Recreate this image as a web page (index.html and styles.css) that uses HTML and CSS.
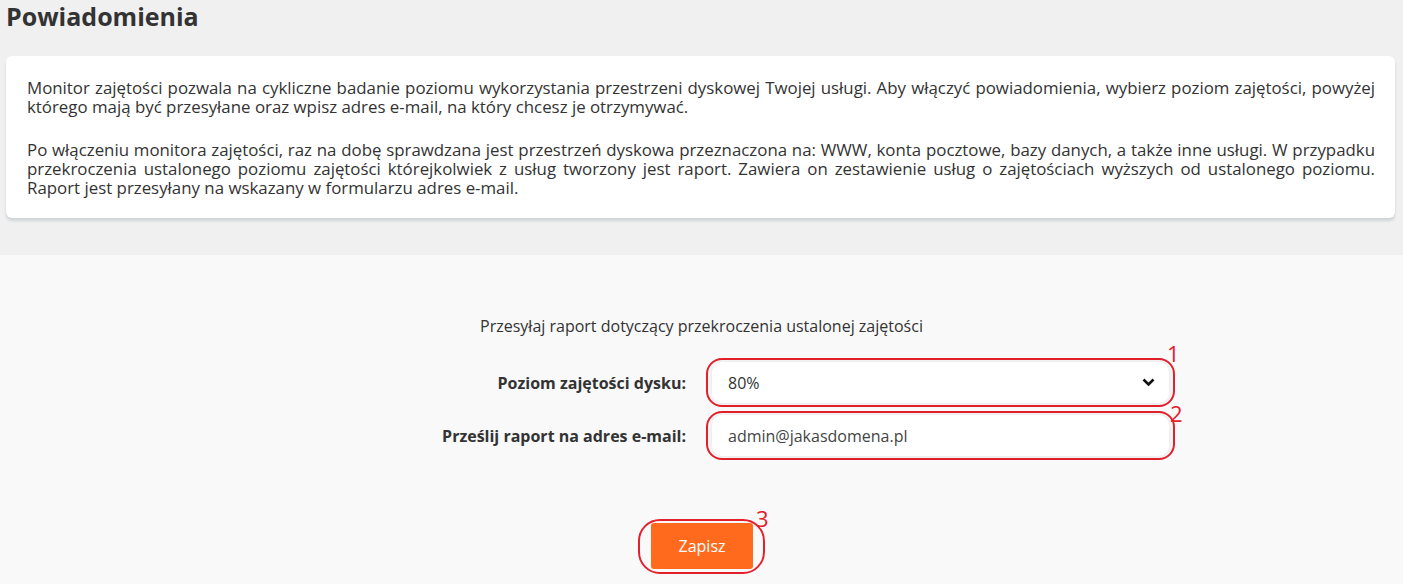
FILE: index.html
```html
<!DOCTYPE html>
<html lang="pl">
<head>
    <meta charset="UTF-8">
    <meta name="viewport" content="width=device-width, initial-scale=1.0">
    <title>Powiadomienia</title>
    <link rel="stylesheet" href="styles.css">
</head>
<body>

<div class="top">
    <h1>Powiadomienia</h1>
    <div class="info-card">
        <p>Monitor zajętości pozwala na cykliczne badanie poziomu wykorzystania przestrzeni dyskowej Twojej usługi. Aby włączyć powiadomienia, wybierz poziom zajętości, powyżej którego mają być przesyłane oraz wpisz adres e-mail, na który chcesz je otrzymywać.</p>
        <p>Po włączeniu monitora zajętości, raz na dobę sprawdzana jest przestrzeń dyskowa przeznaczona na: WWW, konta pocztowe, bazy danych, a także inne usługi. W przypadku przekroczenia ustalonego poziomu zajętości którejkolwiek z usług tworzony jest raport. Zawiera on zestawienie usług o zajętościach wyższych od ustalonego poziomu. Raport jest przesyłany na wskazany w formularzu adres e-mail.</p>
    </div>
</div>

<div class="settings">
    <div class="settings-title">Przesyłaj raport dotyczący przekroczenia ustalonej zajętości</div>

    <div class="form-grid">
        <label class="form-label" for="level">Poziom zajętości dysku:</label>
        <div class="mark">
            <span class="mark-num mark-num-1">1</span>
            <div class="field select-field" id="level">
                <span>80%</span>
                <svg class="chevron" width="13" height="9" viewBox="0 0 13 9">
                    <path d="M1.5 1.5 L6.5 6.5 L11.5 1.5" fill="none" stroke="#111" stroke-width="2.6"/>
                </svg>
            </div>
        </div>

        <label class="form-label" for="email">Prześlij raport na adres e-mail:</label>
        <div class="mark">
            <span class="mark-num mark-num-2">2</span>
            <input class="field" type="text" id="email" value="admin@jakasdomena.pl">
        </div>
    </div>

    <div class="save-row">
        <div class="mark mark-btn">
            <span class="mark-num mark-num-3">3</span>
            <button class="btn">Zapisz</button>
        </div>
    </div>
</div>

</body>
</html>
```

FILE: styles.css
```css
body {
    margin: 0;
    padding: 0;
    background-color: #f9f9f9;
    color: #333;
    font-family: "Open Sans", Arial, sans-serif;
    font-size: 16px;
    overflow: hidden;
}
.top {
    background-color: #f0f0f0;
    padding: 0 8px 37px 6px;
}
h1 {
    margin: 0 0 24px 0;
    font-size: 25px;
    line-height: 32px;
    font-weight: 700;
    color: #333;
}
.info-card {
    background-color: #fff;
    border-radius: 6px;
    padding: 22px 20px 21px 21px;
    box-shadow: 0 3px 3px rgba(40, 70, 90, 0.16);
}
.info-card p {
    margin: 0;
    font-size: 16.85px;
    line-height: 19px;
    text-align: justify;
}
.info-card p + p {
    margin-top: 24px;
}
.settings {
    padding: 62px 0 9px 0;
}
.settings-title {
    text-align: center;
    line-height: 19px;
    margin-bottom: 22px;
}
.form-grid {
    display: grid;
    grid-template-columns: 686px 469px;
    column-gap: 20px;
    row-gap: 4px;
    align-items: center;
}
.form-label {
    text-align: right;
    font-weight: 700;
}
.mark {
    position: relative;
    border: 2px solid #e3202b;
    border-radius: 16px;
    padding: 2px 4px;
}
.mark-num {
    position: absolute;
    color: #e3202b;
    font-size: 22px;
    line-height: 20px;
}
.mark-num-1 {
    left: calc(100% - 6px);
    top: -17px;
}
.mark-num-2 {
    left: calc(100% - 3px);
    top: -10px;
}
.mark-num-3 {
    left: calc(100% - 7px);
    top: -13px;
}
.field {
    display: flex;
    align-items: center;
    justify-content: space-between;
    box-sizing: border-box;
    width: 100%;
    height: 41px;
    padding: 0 14px 0 16px;
    background-color: #fff;
    border: none;
    border-radius: 10px;
    box-shadow: 0 0 5px rgba(0, 0, 0, 0.1);
    font-family: inherit;
    font-size: 16px;
    color: #333;
}
input.field {
    color: #444;
    outline: none;
}
.save-row {
    display: flex;
    justify-content: center;
    margin-top: 59px;
}
.mark-btn {
    border-radius: 22px;
    padding: 2px 10px 3px 11px;
}
.btn {
    display: block;
    width: 102px;
    height: 46px;
    background-color: #ff6a1c;
    color: #fff;
    border: none;
    border-radius: 3px;
    font-family: inherit;
    font-size: 16px;
    cursor: pointer;
}
.btn:hover {
    background-color: #f05a0c;
}
```
